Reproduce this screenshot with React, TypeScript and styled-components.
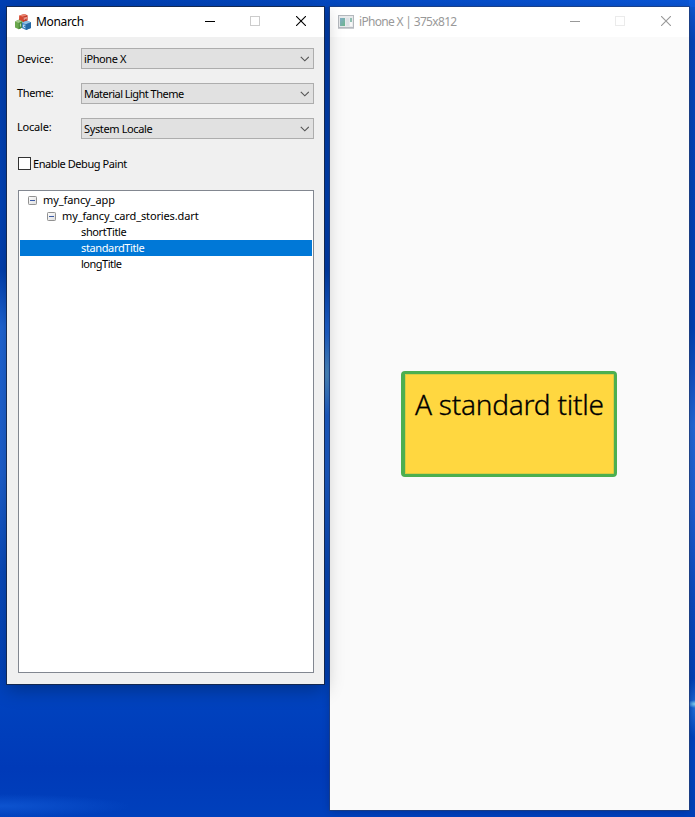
import React from "react";
import styled, { createGlobalStyle } from "styled-components";

const GlobalStyle = createGlobalStyle`
  *, *::before, *::after { box-sizing: border-box; }
  html, body { margin: 0; height: 100%; overflow: hidden; }
  body { font-family: "Noto Sans", "Open Sans", sans-serif; font-size: 11px; color: #000; }
`;

const Desktop = styled.div`
  position: relative;
  width: 695px;
  height: 817px;
  overflow: hidden;
  background:
    radial-gradient(ellipse 6px 42px at 327px 374px, rgba(92, 156, 204, 0.9), transparent),
    radial-gradient(ellipse 130px 12px at 0 806px, rgba(16, 88, 212, 0.8), transparent),
    radial-gradient(ellipse 8px 4px at 695px 704px, rgba(140, 220, 245, 0.9), transparent),
    radial-gradient(ellipse 10px 30px at 695px 708px, rgba(40, 120, 225, 0.8), transparent),
    linear-gradient(90deg, transparent 10%, rgba(14, 92, 222, 0.75) 100%) 0 0 / 695px 7px no-repeat,
    linear-gradient(180deg, #0e5ad4 0%, #0644b8 5%, #0040b0 40%, #124fc0 46%, #2266d4 52%, #1c5cce 62%, #0a48bc 74%, #003eb4 84%, #0044c0 92%, #0040b8 100%) 689px 0 / 6px 817px no-repeat,
    linear-gradient(180deg, #0040b4 0%, #0044bc 25%, #0040b4 33%, #2068dc 40%, #1e62d4 58%, #0a4cc0 70%, #0042be 86%, #003ab8 94%, #0040bc 100%);
`;

const Window = styled.section<{ $x: number; $w: number; $h: number; $bg: string; $front?: boolean }>`
  position: absolute;
  left: ${(p) => p.$x}px;
  top: 7px;
  z-index: ${(p) => (p.$front ? 2 : 1)};
  width: ${(p) => p.$w}px;
  height: ${(p) => p.$h}px;
  display: flex;
  flex-direction: column;
  background: ${(p) => p.$bg};
  box-shadow: ${(p) =>
    p.$front
      ? "0 0 0 1px rgba(24, 38, 66, 0.85), 0 5px 18px rgba(0, 0, 0, 0.3)"
      : "0 0 0 1px rgba(32, 62, 124, 0.8), 0 1px 8px rgba(0, 0, 0, 0.2)"};
`;

const TitleBar = styled.header<{ $inactive?: boolean }>`
  display: flex;
  align-items: center;
  height: 30px;
  flex: none;
  padding-left: 8px;
  background: #fff;
  color: ${(p) => (p.$inactive ? "#999" : "#000")};
  font-size: 12px;
  line-height: 30px;
`;

const Title = styled.span<{ $gap: number; $track: number }>`
  flex: 1;
  margin-left: ${(p) => p.$gap}px;
  letter-spacing: ${(p) => p.$track}px;
  white-space: pre;
`;

const Controls = styled.div<{ $right: number }>`
  display: flex;
  gap: 35px;
  margin: 0 ${(p) => p.$right}px 2px 0;
  & svg { display: block; }
  & svg:last-child { margin-left: 1px; }
`;

const Body = styled.div`
  flex: 1;
  display: flex;
  flex-direction: column;
  padding: 11px 10px 11px 11px;
`;

const Field = styled.div`
  display: grid;
  grid-template-columns: 63px 233px;
  height: 21px;
  margin-bottom: 14px;
`;

const Label = styled.label<{ $lift: number; $track: number }>`
  line-height: 21px;
  margin: -${(p) => p.$lift}px 0 0 -1px;
  letter-spacing: ${(p) => p.$track}px;
`;

const Select = styled.div<{ $track: number }>`
  display: flex;
  align-items: center;
  justify-content: space-between;
  padding: 0 4px 0 2px;
  background: #e1e1e1;
  border: 1px solid #adadad;
  line-height: 19px;
  letter-spacing: ${(p) => p.$track}px;
`;

const Check = styled.label`
  display: flex;
  align-items: center;
  gap: 2px;
  height: 13px;
  margin: 4px 0 20px;
  line-height: 13px;
  letter-spacing: -0.43px;
`;

const Box = styled.span`
  width: 13px;
  height: 13px;
  background: #fff;
  border: 1px solid #333;
`;

const Tree = styled.div`
  flex: 1;
  background: #fff;
  border: 1px solid #828790;
  padding: 1px;
`;

const Row = styled.div<{ $indent: number; $selected?: boolean; $track: number }>`
  display: flex;
  align-items: center;
  gap: 6px;
  height: 16px;
  line-height: 16px;
  padding-left: ${(p) => p.$indent}px;
  letter-spacing: ${(p) => p.$track}px;
  color: ${(p) => (p.$selected ? "#fff" : "#000")};
  background: ${(p) => (p.$selected ? "#0078d7" : "transparent")};
`;

const Preview = styled.div`
  flex: 1;
  padding: 334px 0 0 71px;
`;

const Card = styled.div`
  width: 216px;
  height: 106px;
  padding: 10px 0 0 10px;
  background: #ffd740;
  border: 3px solid #4caf50;
  border-left-width: 4px;
  border-radius: 4px;
  box-shadow: inset 0 0 0 1px rgba(150, 184, 72, 0.35);
  font-family: "Noto Sans", "Open Sans", sans-serif;
  font-size: 28px;
  font-weight: 350;
  line-height: 40px;
  letter-spacing: -0.23px;
  -webkit-text-stroke: 0.3px #000;
  white-space: nowrap;
`;

function WindowControls({ inactive, right }: { inactive?: boolean; right: number }) {
  const ink = inactive ? "#999" : "#000";
  return (
    <Controls $right={right}>
      <svg width="10" height="10"><path d="M0 5.5h10" stroke={ink} /></svg>
      <svg width="10" height="10"><rect x=".5" y=".5" width="9" height="9" fill="none" stroke={inactive ? "#ebebeb" : "#ccc"} /></svg>
      <svg width="10" height="10"><path d="M0 0L10 10M10 0L0 10" stroke={ink} strokeWidth="1.1" /></svg>
    </Controls>
  );
}

function CubesIcon() {
  return (
    <svg width="16" height="16" viewBox="0 0 16 16">
      <path d="M4.2 1.5L9.3 0 12.4 1.2V6.4L8 8 4 6.4z" fill="#d4472f" />
      <path d="M4.2 1.5L9.3 0 12.4 1.2 8 2.8z" fill="#e98672" />
      <path d="M8 2.8L12.4 1.2V6.4L8 8z" fill="#c23a28" />
      <path d="M9.2 6V3.6l1 1 1-1.5V5.4" fill="none" stroke="#ffd9d0" strokeWidth=".7" />
      <path d="M0 7.4L3.5 5.8 7.4 7.2V13.4l-3.7 1.8L0 13.5z" fill="#6ba84e" />
      <path d="M0 7.4L3.5 5.8 7.4 7.2 3.8 8.9z" fill="#a3c98c" />
      <path d="M3.8 8.9L7.4 7.2V13.4l-3.7 1.8z" fill="#4a8a38" />
      <path d="M5.4 12.6V9.6" fill="none" stroke="#e4f5d8" strokeWidth=".8" />
      <path d="M6.8 8.8L12 6.7l4 1.6v5.6L11 16l-4.2-2z" fill="#3b82bd" />
      <path d="M6.8 8.8L12 6.7l4 1.6-5 2z" fill="#8fbfe2" />
      <path d="M11 10.3l5-2v5.6L11 16z" fill="#2669a6" />
      <path d="M10.2 11.4l-1.8-.5v2.2l1.8.6" fill="none" stroke="#e5f3ff" strokeWidth=".8" />
    </svg>
  );
}

function AppIcon() {
  return (
    <svg width="16" height="14" viewBox="0 0 16 14">
      <defs>
        <linearGradient id="pane" x1="0" y1="0" x2="1" y2="1">
          <stop offset="0" stopColor="#84aecb" />
          <stop offset="1" stopColor="#6cb58b" />
        </linearGradient>
      </defs>
      <rect x=".5" y=".5" width="15" height="12" fill="#e8eaec" stroke="#b4b8bd" />
      <path d="M0 13.4h16" stroke="#c4c8cc" />
      <rect x="2" y="3" width="5" height="8" fill="url(#pane)" />
      <rect x="8" y="3" width="3" height="8" fill="#dde1e6" />
      <rect x="12" y="3" width="2" height="4" fill="#91bfb2" />
      <rect x="12" y="7" width="2" height="4" fill="#f8f8f8" />
    </svg>
  );
}

const Chevron = () => (
  <svg width="9" height="6" viewBox="0 0 9 6">
    <path d="M.8 .8L4.8 4.8 8.8 .8" fill="none" stroke="#555" strokeWidth="1.15" />
  </svg>
);

const Expander = () => (
  <svg width="9" height="9" viewBox="0 0 9 9">
    <defs>
      <linearGradient id="knob" x1="0" y1="0" x2="1" y2="1">
        <stop offset="0" stopColor="#fff" />
        <stop offset="1" stopColor="#dcdcdc" />
      </linearGradient>
    </defs>
    <rect x=".5" y=".5" width="8" height="8" rx=".8" fill="url(#knob)" stroke="#919191" />
    <path d="M2 4.5h5" stroke="#3b5aa5" />
  </svg>
);

const fields = [
  { label: "Device:", value: "iPhone X", lift: 0, labelTrack: -0.08, track: -0.4 },
  { label: "Theme:", value: "Material Light Theme", lift: 1, labelTrack: -0.35, track: -0.53 },
  { label: "Locale:", value: "System Locale", lift: 2, labelTrack: -0.2, track: -0.37 },
];

const rows = [
  { text: "my_fancy_app", indent: 8, open: true, track: -0.1 },
  { text: "my_fancy_card_stories.dart", indent: 27, open: true, track: -0.13 },
  { text: "shortTitle", indent: 61, track: -0.38 },
  { text: "standardTitle", indent: 61, selected: true, track: -0.37 },
  { text: "longTitle", indent: 61, track: -0.5 },
];

export default function App() {
  return (
    <>
      <GlobalStyle />
      <Desktop>
        <Window $x={330} $w={359} $h={803} $bg="#fafafa">
          <TitleBar $inactive>
            <AppIcon />
            <Title $gap={5} $track={-0.68}>iPhone X | 375x812</Title>
            <WindowControls inactive right={18} />
          </TitleBar>
          <Preview>
            <Card>A standard title</Card>
          </Preview>
        </Window>
        <Window $x={7} $w={317} $h={677} $bg="#f0f0f0" $front>
          <TitleBar>
            <CubesIcon />
            <Title $gap={5} $track={-0.35}>Monarch</Title>
            <WindowControls right={18} />
          </TitleBar>
          <Body>
            {fields.map((f) => (
              <Field key={f.label}>
                <Label $lift={f.lift} $track={f.labelTrack}>{f.label}</Label>
                <Select $track={f.track}>
                  <span>{f.value}</span>
                  <Chevron />
                </Select>
              </Field>
            ))}
            <Check><Box />Enable Debug Paint</Check>
            <Tree>
              {rows.map((r) => (
                <Row key={r.text} $indent={r.indent} $selected={r.selected} $track={r.track}>
                  {r.open && <Expander />}
                  <span>{r.text}</span>
                </Row>
              ))}
            </Tree>
          </Body>
        </Window>
      </Desktop>
    </>
  );
}
